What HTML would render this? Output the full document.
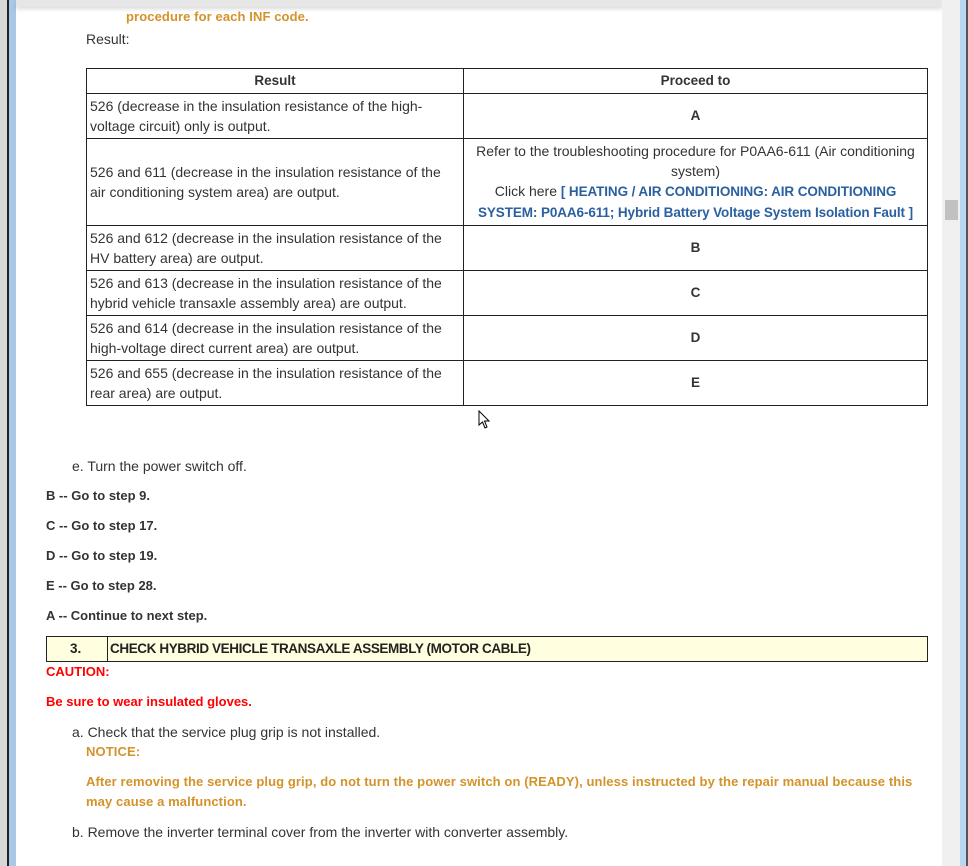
<!DOCTYPE html>
<html><head><meta charset="utf-8"><style>
*{margin:0;padding:0;box-sizing:border-box}
body{width:968px;height:866px;overflow:hidden;background:#fff;font-family:"Liberation Sans",Arial,sans-serif;color:#333;font-size:14px;position:relative}
.a{position:absolute;white-space:nowrap}
.b{font-weight:bold;font-size:13px}
table{position:absolute;left:86px;top:68px;width:842px;border-collapse:collapse;font-size:14px;color:#333}
td{border:1px solid #222;padding:0 3px;line-height:20px;vertical-align:middle}
td.c{text-align:center;font-weight:bold;font-size:13.5px}
td.r{text-align:center;white-space:nowrap}
.lk{color:#2a5fa0;font-weight:bold;font-size:13.5px;letter-spacing:-0.1px}
.or{color:#d4922a;font-weight:bold;font-size:13px;letter-spacing:0.1px}
.red{color:#f00;font-size:13px;font-weight:bold}
</style></head><body>
<div style="position:absolute;left:0;top:0;width:7px;height:866px;background:#d8d8d8"></div>
<div style="position:absolute;left:7px;top:0;width:2px;height:866px;background:#222"></div>
<div style="position:absolute;left:9px;top:0;width:7px;height:866px;background:#a9c8e6"></div>
<div style="position:absolute;left:16px;top:0;width:926px;height:7px;background:#e6e6e6;box-shadow:0 2px 4px rgba(0,0,0,.15)"></div>
<div style="position:absolute;left:942px;top:0;width:18px;height:866px;background:#f0f0f0"></div>
<div style="position:absolute;left:945px;top:200px;width:13px;height:20px;background:#c1c1c1"></div>
<div style="position:absolute;left:960px;top:0;width:6px;height:866px;background:#b9d6f2"></div>
<div style="position:absolute;left:966px;top:0;width:2px;height:866px;background:#555"></div>

<div class="a or" style="left:126px;top:9px">procedure for each INF code.</div>
<div class="a" style="left:86px;top:31px">Result:</div>

<table>
<tr style="height:25px"><td class="c" style="width:377px">Result</td><td class="c">Proceed to</td></tr>
<tr style="height:45px"><td>526 (decrease in the insulation resistance of the high-<br>voltage circuit) only is output.</td><td class="c">A</td></tr>
<tr style="height:87px"><td>526 and 611 (decrease in the insulation resistance of the<br>air conditioning system area) are output.</td><td class="r">Refer to the troubleshooting procedure for P0AA6-611 (Air conditioning<br>system)<br>Click here <span class="lk">[ HEATING / AIR CONDITIONING: AIR CONDITIONING<br>SYSTEM: P0AA6-611; Hybrid Battery Voltage System Isolation Fault ]</span></td></tr>
<tr style="height:45px"><td>526 and 612 (decrease in the insulation resistance of the<br>HV battery area) are output.</td><td class="c">B</td></tr>
<tr style="height:45px"><td>526 and 613 (decrease in the insulation resistance of the<br>hybrid vehicle transaxle assembly area) are output.</td><td class="c">C</td></tr>
<tr style="height:45px"><td>526 and 614 (decrease in the insulation resistance of the<br>high-voltage direct current area) are output.</td><td class="c">D</td></tr>
<tr style="height:45px"><td>526 and 655 (decrease in the insulation resistance of the<br>rear area) are output.</td><td class="c">E</td></tr>
</table>

<svg class="a" style="left:478px;top:410px" width="13" height="19" viewBox="0 0 13 19"><path d="M1 1 L1 15 L4.5 12 L7 18 L9 17 L6.5 11 L11 11 Z" fill="#fff" stroke="#000" stroke-width="1"/></svg>

<div class="a" style="left:72px;top:458px">e. Turn the power switch off.</div>
<div class="a b" style="left:46px;top:488px">B -- Go to step 9.</div>
<div class="a b" style="left:46px;top:518px">C -- Go to step 17.</div>
<div class="a b" style="left:46px;top:548px">D -- Go to step 19.</div>
<div class="a b" style="left:46px;top:578px">E -- Go to step 28.</div>
<div class="a b" style="left:46px;top:608px">A -- Continue to next step.</div>

<div style="position:absolute;left:46px;top:636px;width:882px;height:26px;border:1px solid #222;background:#ffffe0"></div>
<div style="position:absolute;left:107px;top:636px;width:1px;height:26px;background:#222"></div>
<div class="a" style="left:70px;top:641px;font-weight:bold;font-size:13.5px;color:#222">3.</div>
<div class="a" style="left:110px;top:641px;font-weight:bold;font-size:13.5px;letter-spacing:-0.4px;color:#222">CHECK HYBRID VEHICLE TRANSAXLE ASSEMBLY (MOTOR CABLE)</div>
<div class="a red" style="left:46px;top:664px">CAUTION:</div>
<div class="a red" style="left:46px;top:694px">Be sure to wear insulated gloves.</div>
<div class="a" style="left:72px;top:724px">a. Check that the service plug grip is not installed.</div>
<div class="a or" style="left:86px;top:744px">NOTICE:</div>
<div class="a or" style="left:86px;top:774px">After removing the service plug grip, do not turn the power switch on (READY), unless instructed by the repair manual because this</div>
<div class="a or" style="left:86px;top:794px">may cause a malfunction.</div>
<div class="a" style="left:72px;top:824px">b. Remove the inverter terminal cover from the inverter with converter assembly.</div>
</body></html>
